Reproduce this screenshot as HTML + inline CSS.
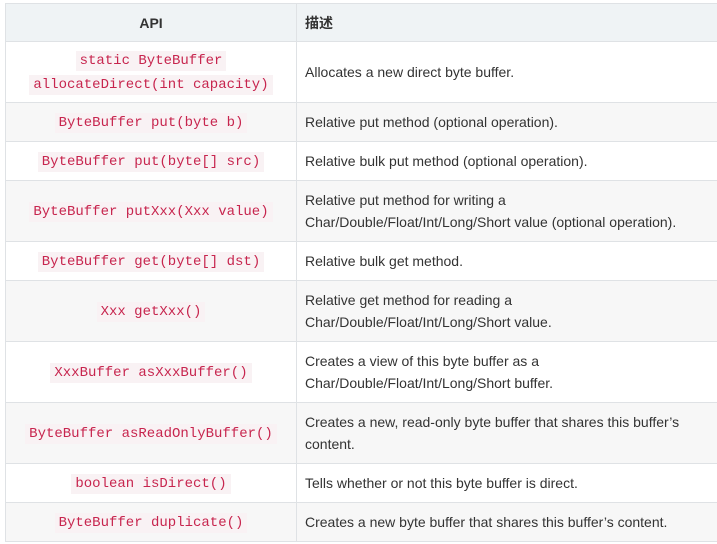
<!DOCTYPE html>
<html><head><meta charset="utf-8"><style>
body{margin:0;background:#fff;}
table{position:absolute;left:5px;top:3px;border-collapse:collapse;table-layout:fixed;width:712px;font-family:"Liberation Sans","Noto Sans CJK SC",sans-serif;font-size:14px;color:#333;}
td,th{border:1px solid #dfe2e5;padding:0 8px;line-height:22px;}
th{background:#eff3f5;height:37px;font-weight:bold;}
th:first-child{text-align:center;}
th:last-child{text-align:left;}
td:first-child{text-align:center;}
tr:nth-child(odd) td{background:#f7f7f7;}
tr.s td{height:38px;}
tr.d td{height:60px;}
code{font-family:"Liberation Mono",monospace;font-size:14px;color:#c7254e;background:#f9f2f4;padding:2px 4px;line-height:22px;}
</style></head><body>
<table>
<colgroup><col style="width:291px"><col style="width:421px"></colgroup>
<tr><th>API</th><th>描述</th></tr>
<tr class="d"><td><code>static ByteBuffer</code><br><code>allocateDirect(int capacity)</code></td><td>Allocates a new direct byte buffer.</td></tr>
<tr class="s"><td><code>ByteBuffer put(byte b)</code></td><td>Relative put method (optional operation).</td></tr>
<tr class="s"><td><code>ByteBuffer put(byte[] src)</code></td><td>Relative bulk put method (optional operation).</td></tr>
<tr class="d"><td><code>ByteBuffer putXxx(Xxx value)</code></td><td>Relative put method for writing a<br>Char/Double/Float/Int/Long/Short value (optional operation).</td></tr>
<tr class="s"><td><code>ByteBuffer get(byte[] dst)</code></td><td>Relative bulk get method.</td></tr>
<tr class="d"><td><code>Xxx getXxx()</code></td><td>Relative get method for reading a<br>Char/Double/Float/Int/Long/Short value.</td></tr>
<tr class="d"><td><code>XxxBuffer asXxxBuffer()</code></td><td>Creates a view of this byte buffer as a<br>Char/Double/Float/Int/Long/Short buffer.</td></tr>
<tr class="d"><td><code>ByteBuffer asReadOnlyBuffer()</code></td><td>Creates a new, read-only byte buffer that shares this buffer’s<br>content.</td></tr>
<tr class="s"><td><code>boolean isDirect()</code></td><td>Tells whether or not this byte buffer is direct.</td></tr>
<tr class="s"><td><code>ByteBuffer duplicate()</code></td><td>Creates a new byte buffer that shares this buffer’s content.</td></tr>
</table>
</body></html>
